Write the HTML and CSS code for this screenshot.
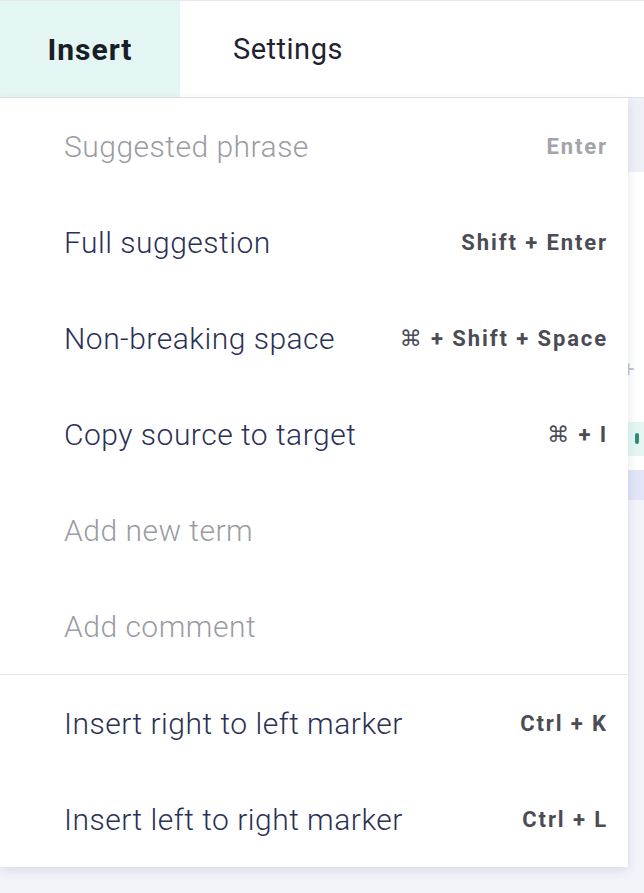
FILE: index.html
```html
<!DOCTYPE html>
<html>
<head>
<meta charset="utf-8">
<link rel="stylesheet" href="styles.css">
</head>
<body>
<div class="page">
  <div class="backdrop">
    <div class="bd-top"></div>
    <div class="bd-white"></div>
    <div class="bd-plus">+</div>
    <div class="bd-green"><span class="dot"></span></div>
    <div class="bd-gap"></div>
    <div class="bd-blue"></div>
  </div>
  <header class="tabs">
    <div class="tab active">Insert</div>
    <div class="tab">Settings</div>
  </header>
  <div class="menu">
    <div class="item disabled"><span class="label">Suggested phrase</span><span class="key">Enter</span></div>
    <div class="item"><span class="label">Full suggestion</span><span class="key">Shift + Enter</span></div>
    <div class="item"><span class="label">Non-breaking space</span><span class="key"><span class="cmd">⌘</span> + Shift + Space</span></div>
    <div class="item"><span class="label">Copy source to target</span><span class="key"><span class="cmd">⌘</span> + I</span></div>
    <div class="item disabled"><span class="label">Add new term</span></div>
    <div class="item disabled"><span class="label">Add comment</span></div>
    <div class="divider"></div>
    <div class="item"><span class="label">Insert right to left marker</span><span class="key">Ctrl + K</span></div>
    <div class="item"><span class="label">Insert left to right marker</span><span class="key">Ctrl + L</span></div>
  </div>
</div>
</body>
</html>
```
FILE: styles.css
```css
html, body {
  margin: 0;
  padding: 0;
}
body {
  width: 644px;
  height: 893px;
  overflow: hidden;
  background: #f3f4fa;
  font-family: Roboto, "Liberation Sans", sans-serif;
}
.page {
  position: relative;
  width: 644px;
  height: 893px;
}
.backdrop {
  position: absolute;
  left: 628px;
  top: 98px;
  width: 16px;
  height: 795px;
  display: flex;
  flex-direction: column;
}
.bd-top {
  height: 74px;
  background: #eef0f7;
}
.bd-white {
  height: 178px;
  background: #ffffff;
}
.bd-plus {
  height: 72px;
  background: #ffffff;
  color: #c2c4cc;
  font-size: 22px;
  line-height: 40px;
  margin-left: -8px;
  padding-left: 8px;
  text-indent: -6px;
}
.bd-green {
  height: 34px;
  background: #e4f6f3;
  position: relative;
}
.bd-green .dot {
  position: absolute;
  left: 7px;
  top: 11px;
  width: 4px;
  height: 11px;
  background: #2f8f73;
  border-radius: 2px;
}
.bd-gap {
  height: 14px;
  background: #ffffff;
}
.bd-blue {
  height: 30px;
  background: #e2e5f7;
}
.tabs {
  position: relative;
  display: flex;
  height: 96px;
  background: #ffffff;
  border-top: 1px solid #e6e7ea;
  border-bottom: 1px solid #e2e3e7;
}
.tab {
  display: flex;
  align-items: center;
  font-size: 29px;
  font-weight: 400;
  letter-spacing: 0.5px;
  color: #1f2230;
}
.tab.active {
  width: 180px;
  justify-content: center;
  background: #e3f6f4;
  font-size: 30px;
  font-weight: 700;
  letter-spacing: 1px;
  color: #1a1c26;
}
.tab + .tab {
  padding-left: 53px;
}
.menu {
  position: relative;
  width: 628px;
  background: #ffffff;
  box-shadow: 0 4px 10px rgba(40, 50, 110, 0.12);
  display: flex;
  flex-direction: column;
}
.item {
  height: 96px;
  display: flex;
  align-items: center;
  justify-content: space-between;
  padding: 0 22px 0 64px;
}
.label {
  font-size: 30px;
  font-weight: 300;
  letter-spacing: 0.5px;
  color: #2b3155;
}
.key {
  font-size: 22px;
  font-weight: 700;
  letter-spacing: 1.9px;
  color: #4b4c56;
  margin-right: -2px;
}
.cmd {
  font-family: "DejaVu Sans", sans-serif;
  font-weight: 400;
}
.item.disabled .label {
  color: #9b9ca5;
}
.item.disabled .key {
  color: #a3a4ab;
}
.divider {
  height: 1px;
  background: #e6e6ea;
}
```
